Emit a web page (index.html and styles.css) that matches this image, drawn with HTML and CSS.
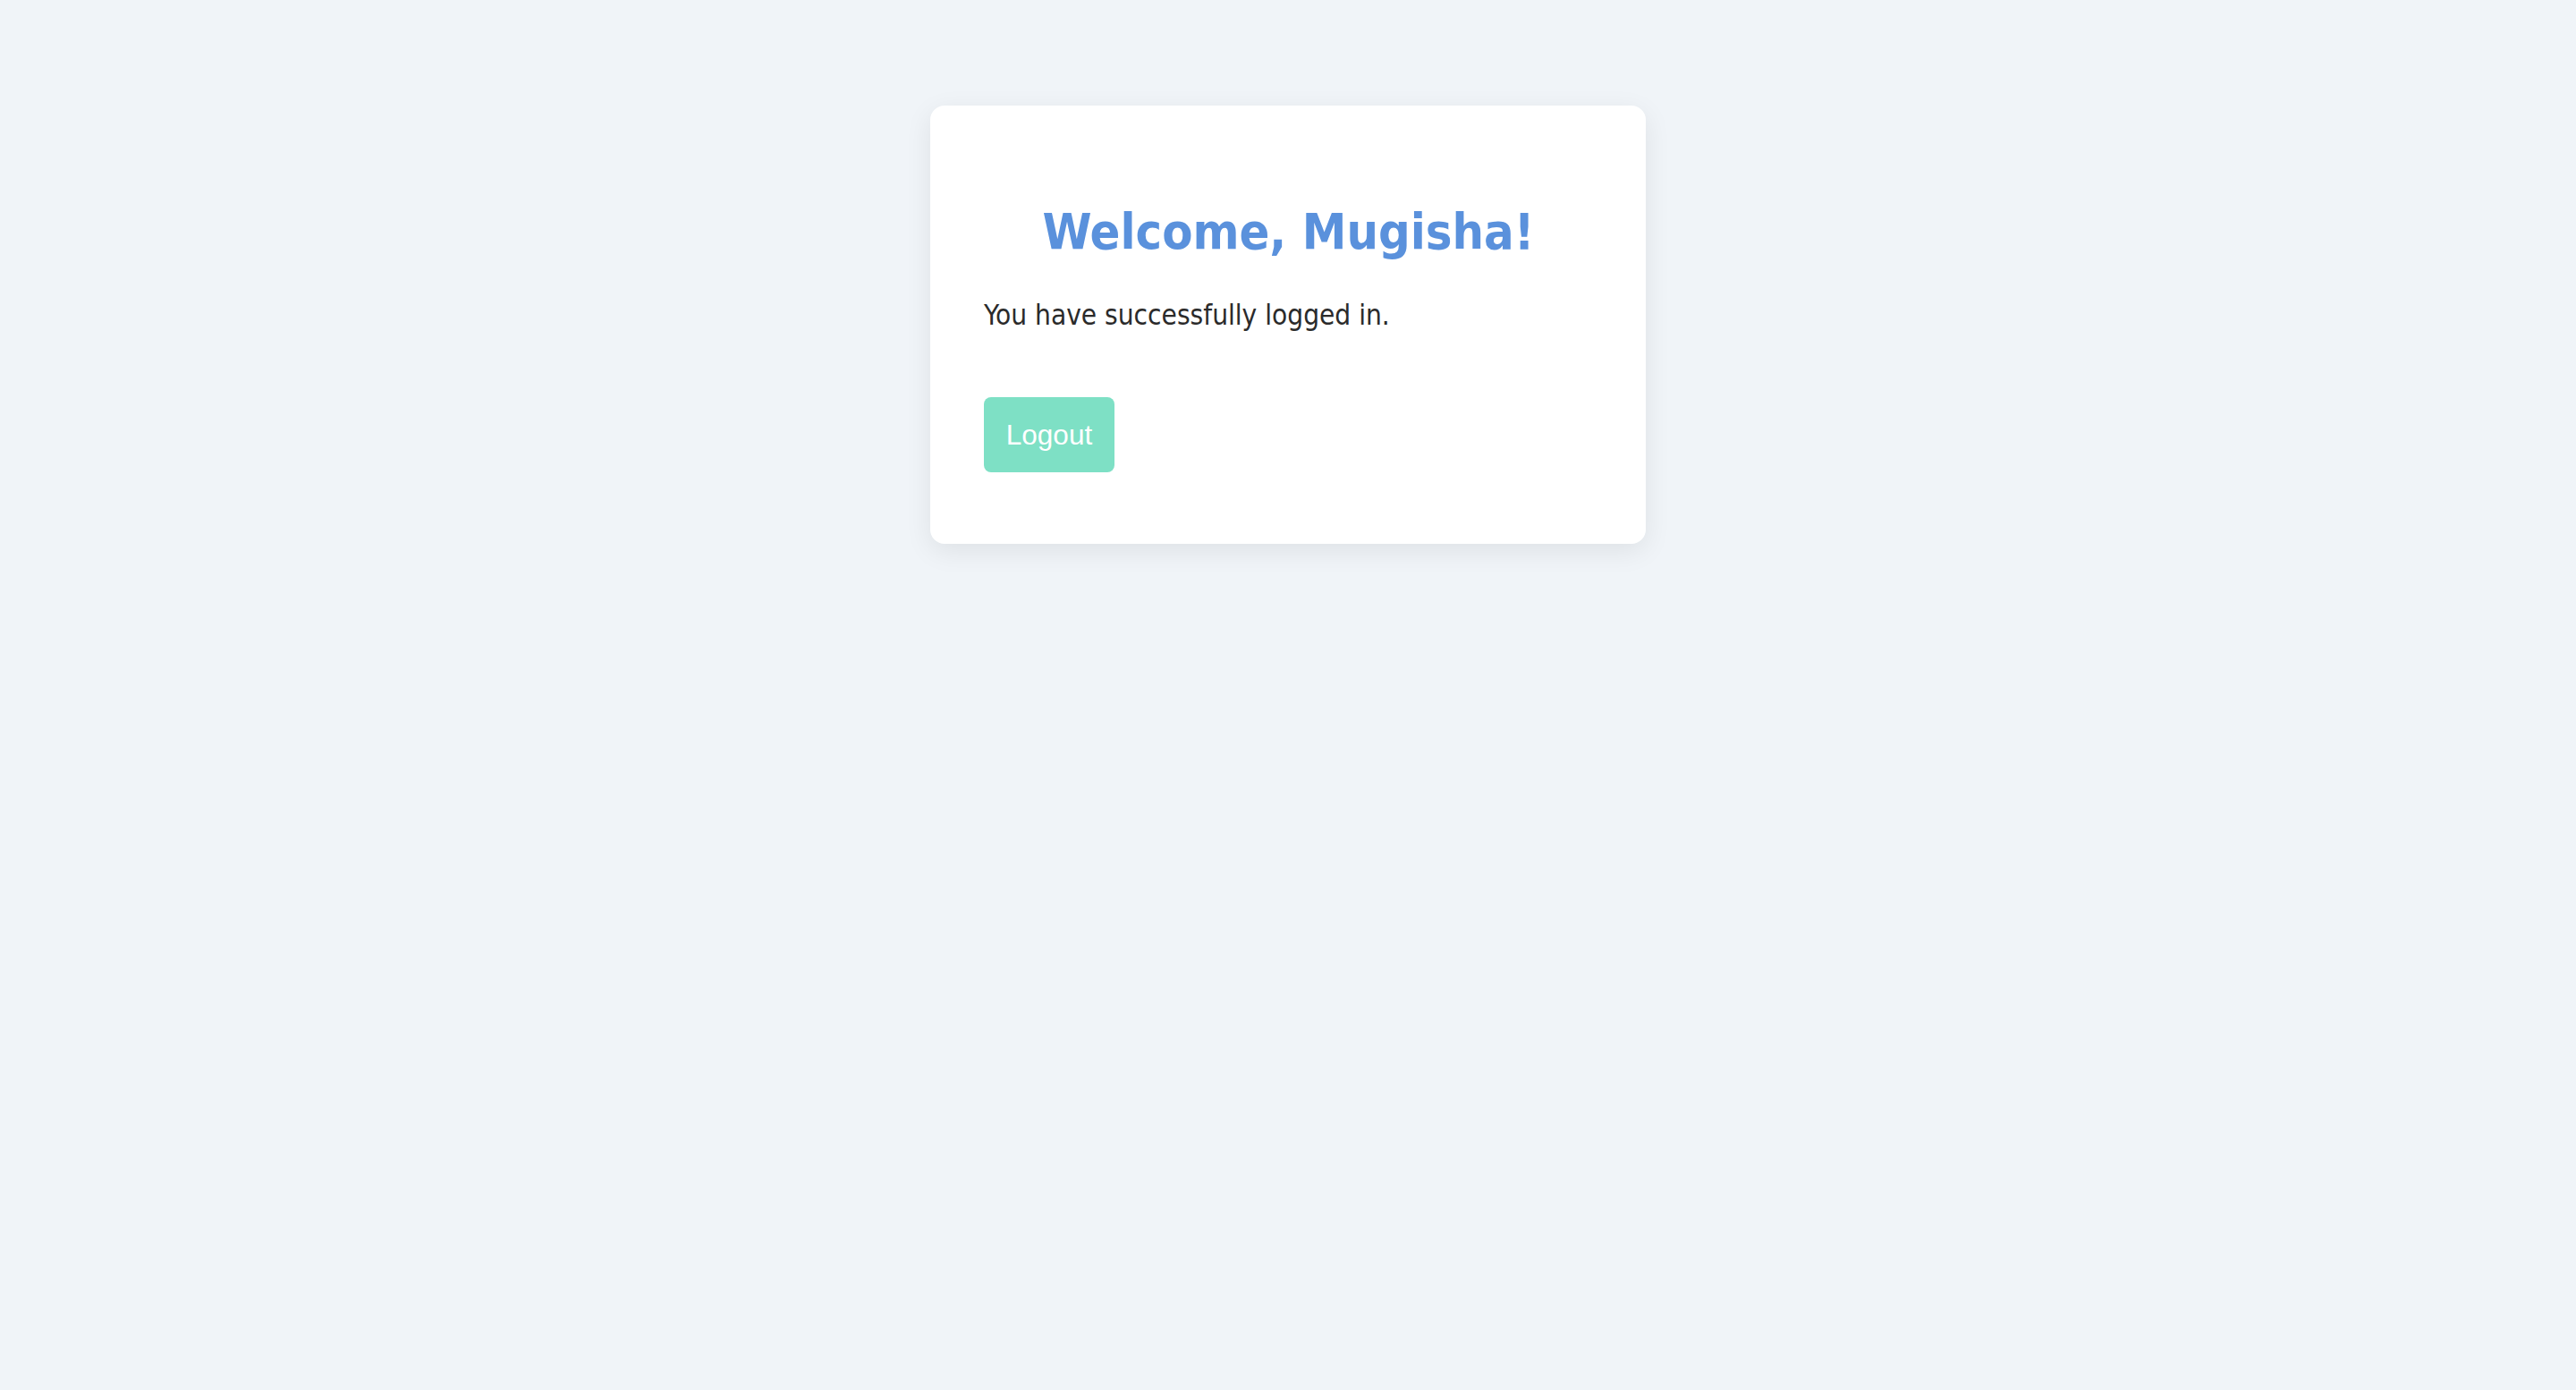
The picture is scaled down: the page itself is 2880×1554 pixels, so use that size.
FILE: index.html
```html
<!DOCTYPE html>
<html lang="en">
<head>
<meta charset="utf-8">
<title>Welcome</title>
<link rel="stylesheet" href="styles.css">
</head>
<body>
<main class="page">
  <section class="card">
    <h1 class="title">Welcome, Mugisha!</h1>
    <p class="message">You have successfully logged in.</p>
    <button class="logout" type="button">Logout</button>
  </section>
</main>
</body>
</html>
```

FILE: styles.css
```css
html, body {
  margin: 0;
  padding: 0;
}
body {
  background: #f0f4f8;
  font-family: "DejaVu Sans Condensed", "DejaVu Sans", sans-serif;
  color: #333333;
  min-height: 1554px;
}
.page {
  display: flex;
  justify-content: center;
  padding-top: 118px;
}
.card {
  box-sizing: border-box;
  width: 800px;
  height: 490px;
  background: #ffffff;
  border-radius: 16px;
  box-shadow: 0 8px 30px rgba(0, 0, 0, 0.08);
  padding: 0 59px 0 60px;
  display: flex;
  flex-direction: column;
  align-items: flex-start;
}
.title {
  align-self: stretch;
  text-align: center;
  margin: 106px 0 0;
  font-size: 55.5px;
  line-height: 70px;
  font-weight: bold;
  color: #5a91dc;
}
.message {
  margin: 40px 0 0;
  font-size: 31.3px;
  line-height: 36px;
  color: #2b2b2b;
}
.logout {
  margin-top: 74px;
  width: 146px;
  height: 84px;
  padding: 0;
  border: none;
  border-radius: 8px;
  background: #7ee0c5;
  color: #ffffff;
  font-family: "Liberation Sans", Arial, sans-serif;
  font-size: 31.5px;
}
```
